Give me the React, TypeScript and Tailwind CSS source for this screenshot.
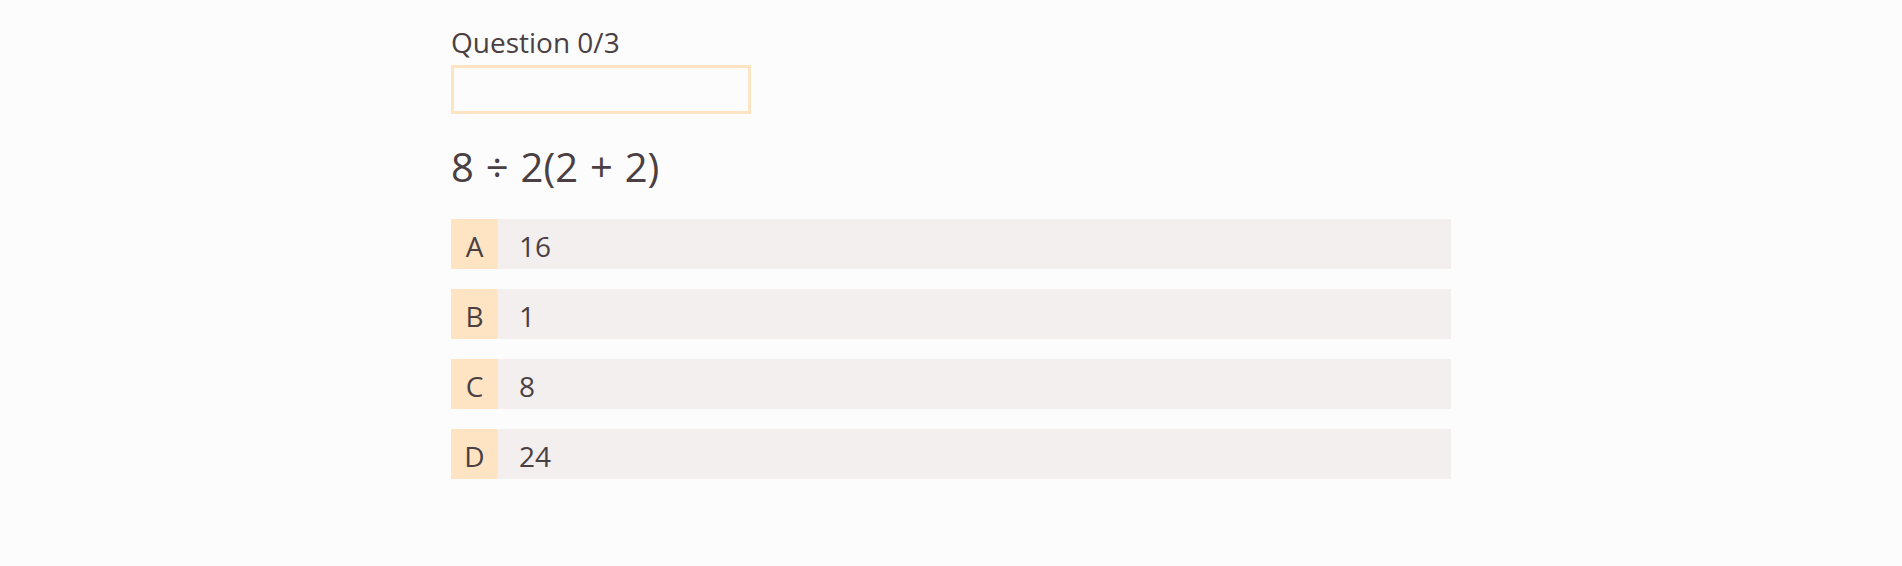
import React from "react";

const options = [
  { letter: "A", text: "16" },
  { letter: "B", text: "1" },
  { letter: "C", text: "8" },
  { letter: "D", text: "24" },
];

export default function App() {
  return (
    <div
      className="min-h-[566px] w-full bg-[#fcfcfc] text-[#4a3f42]"
      style={{ fontFamily: '"Open Sans", "Noto Sans", sans-serif' }}
    >
      <div className="mx-auto w-[1000px] pt-[25px]">
        <div className="text-[28px] leading-[34px]">Question 0/3</div>
        <div className="mt-[6px] h-[49px] w-[300px] border-[3px] border-[#ffe4c4]" />
        <div className="mt-[29px] text-[40px] leading-[48px] [word-spacing:1.5px]">8 ÷ 2(2 + 2)</div>
        <div className="mt-[28px] flex flex-col gap-[20px]">
          {options.map((o) => (
            <div key={o.letter} className="flex h-[50px] bg-[#f3efee] text-[28px]">
              <div className="flex w-[47px] items-center justify-center bg-[#ffe4c4] pt-[3px]">
                {o.letter}
              </div>
              <div className="flex items-center pl-[21px] pt-[3px]">{o.text}</div>
            </div>
          ))}
        </div>
      </div>
    </div>
  );
}
